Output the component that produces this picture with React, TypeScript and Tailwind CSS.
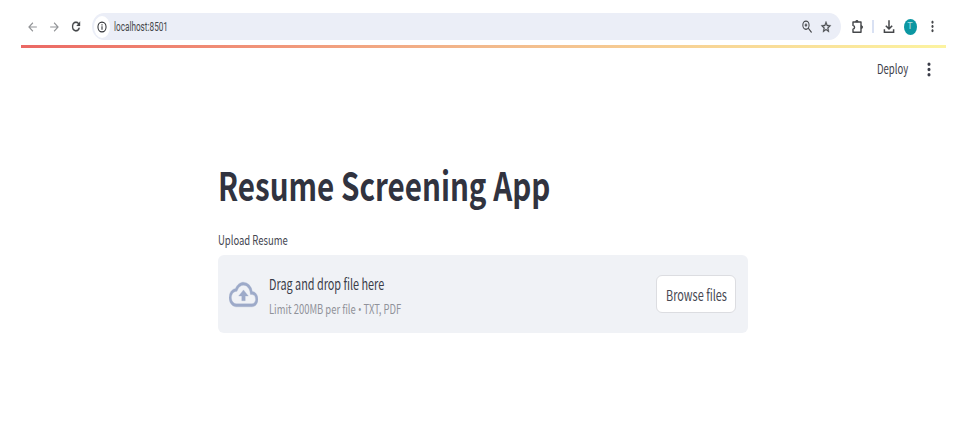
import { useLayoutEffect, useRef, useState, type ReactNode } from "react";

const sans = "font-['Noto_Sans_CJK_SC',sans-serif]";

/** A single line of condensed text that fills the width of its box. */
function Line({ children, className }: { children: ReactNode; className: string }) {
  const box = useRef<HTMLDivElement>(null);
  const text = useRef<HTMLSpanElement>(null);
  const [scale, setScale] = useState(1);
  useLayoutEffect(() => {
    if (box.current && text.current) {
      setScale(box.current.clientWidth / text.current.offsetWidth);
    }
  }, []);
  return (
    <div ref={box} className={`shrink-0 whitespace-nowrap ${className}`}>
      <span ref={text} className="inline-block origin-left" style={{ transform: `scaleX(${scale})` }}>
        {children}
      </span>
    </div>
  );
}

function Icon({ d, className }: { d: string; className: string }) {
  return (
    <svg viewBox="0 0 24 24" preserveAspectRatio="none" fill="currentColor" className={`shrink-0 ${className}`}>
      <path d={d} />
    </svg>
  );
}

const DOTS =
  "M12 8c1.1 0 2-.9 2-2s-.9-2-2-2-2 .9-2 2 .9 2 2 2zm0 2c-1.1 0-2 .9-2 2s.9 2 2 2 2-.9 2-2-.9-2-2-2zm0 6c-1.1 0-2 .9-2 2s.9 2 2 2 2-.9 2-2-.9-2-2-2z";

function BrowserBar() {
  return (
    <header className="flex h-[27px] items-center pl-[26px] text-[#45474a]">
      <Icon className="h-[14px] w-[13px] text-[#929497]" d="M20 11H7.83l5.59-5.59L12 4l-8 8 8 8 1.41-1.41L7.83 13H20v-2z" />
      <Icon className="ml-[9px] h-[14px] w-[13px] text-[#929497]" d="M12 4l-1.41 1.41L16.17 11H4v2h12.17l-5.58 5.59L12 20l8-8z" />
      <Icon
        className="ml-[9px] h-[15px] w-[12px] stroke-current stroke-[0.3]"
        d="M17.65 6.35A7.96 7.96 0 0 0 12 4a8 8 0 1 0 7.73 10h-2.6A5.6 5.6 0 1 1 12 6.4c1.55 0 2.95.7 4 1.75L13 11h7.2V3.8z"
      />
      <div className="ml-[10px] flex h-[27px] w-[749px] items-center rounded-[12px/13.5px] bg-[#ebeef7] pl-[2px] pr-[9px]">
        <span className="flex h-[22px] w-[16px] items-center justify-center rounded-[50%] bg-white">
          <Icon
            className="h-[12px] w-[10px] text-[#303236]"
            d="M12 1a11 11 0 1 0 0 22 11 11 0 0 0 0-22zm0 2.5a8.5 8.5 0 1 1 0 17 8.5 8.5 0 0 1 0-17zM10.7 6.5h2.6v2.6h-2.6zM10.7 10.7h2.6v6.8h-2.6z"
          />
        </span>
        <Line className="ml-[4px] mt-[1px] w-[54px] font-[Roboto,sans-serif] text-[12px] leading-[27px] text-[#45474a]">localhost:8501</Line>
        <span className="grow" />
        <svg viewBox="0 0 24 24" preserveAspectRatio="none" fill="none" stroke="currentColor" strokeWidth="2.5" className="h-[13px] w-[10px]">
          <circle cx="9.5" cy="9.5" r="7.5" />
          <path d="M15 15l8 8M6.5 9.5h6M9.5 6.5v6" />
        </svg>
        <Icon
          className="ml-[8px] h-[14px] w-[12px] stroke-current stroke-[0.6]"
          d="M22 9.24l-7.19-.62L12 2 9.19 8.63 2 9.24l5.46 4.73L5.82 21 12 17.27 18.18 21l-1.63-7.03L22 9.24zM12 15.4l-3.76 2.27 1-4.28-3.32-2.88 4.38-.38L12 6.1l1.71 4.04 4.38.38-3.32 2.88 1 4.28L12 15.4z"
        />
      </div>
      <svg viewBox="0 0 12 14" fill="none" stroke="currentColor" strokeWidth="1.4" strokeLinejoin="round" className="ml-[11px] h-[14px] w-[12px] shrink-0">
        <path d="M1 2h8v10.2H1V9.2c2.1-.4 2.1-3.4 0-3.8z" />
        <path d="M3.6 1.7a1.3 1.4 0 0 1 2.6 0zM9.3 5.6a1.3 1.5 0 0 1 0 3z" fill="currentColor" strokeWidth=".8" />
      </svg>
      <span className="ml-[8px] h-[13px] w-[1.5px] bg-[#d9e1f3]" />
      <svg viewBox="0 0 12 14" fill="none" stroke="currentColor" strokeWidth="1.5" className="ml-[9px] h-[14px] w-[12px] shrink-0">
        <path d="M6 .3v8.6M2.8 5.7L6 8.9l3.2-3.2M1.4 9.3v3h9.2v-3" />
      </svg>
      <span className="ml-[9px] flex h-[16px] w-[13px] items-center justify-center rounded-[50%] bg-[#0b97a2] font-[Roboto,sans-serif] text-[9px] text-[#b5e0e4]">
        T
      </span>
      <Icon className="ml-[9px] h-[17px] w-[13px]" d={DOTS} />
    </header>
  );
}

function Uploader() {
  return (
    <section className="flex h-[78px] w-[530px] items-center rounded-[6px] bg-[#f0f2f6] pl-[11px] pr-[12px]">
      <Icon
        className="mt-[1px] h-[37px] w-[29px] stroke-current stroke-[0.2] text-[#9daac9]"
        d="M19.35 10.04A7.49 7.49 0 0 0 12 4C9.11 4 6.6 5.64 5.35 8.04A5.994 5.994 0 0 0 0 14c0 3.31 2.69 6 6 6h13c2.76 0 5-2.24 5-5 0-2.64-2.05-4.78-4.65-4.96zM19 18H6c-2.21 0-4-1.79-4-4 0-2.05 1.53-3.76 3.56-3.97l1.07-.11.5-.95A5.469 5.469 0 0 1 12 6c2.62 0 4.88 1.86 5.39 4.43l.3 1.5 1.53.11A2.98 2.98 0 0 1 22 15c0 1.65-1.35 3-3 3zM8 13h2.55v3h2.9v-3H16l-4-4z"
      />
      <div className="ml-[11px] mt-[6px] grow">
        <Line className="w-[115px] text-[15px] leading-[24px] text-[#3b3d49]">Drag and drop file here</Line>
        <Line className="w-[132px] text-[13px] leading-[25px] text-[#90929a]">
          Limit 200MB per file <span className="font-['Open_Sans',sans-serif]">•</span> TXT, PDF
        </Line>
      </div>
      <button className="flex h-[38px] w-[80px] items-center justify-center rounded-[6px] border border-[#dcdde1] bg-white pl-[1px]">
        <Line className="w-[61px] text-left text-[15px] leading-[25px] text-[#464852]">Browse files</Line>
      </button>
    </section>
  );
}

export default function App() {
  return (
    <div className={`h-[442px] w-[970px] overflow-hidden bg-white pt-[13px] ${sans}`}>
      <BrowserBar />
      <div className="ml-[21px] mt-[5px] h-[3px] w-[925px] bg-linear-to-r from-[#eb6864] via-[#f2b98c] to-[#fcf3a0]" />
      <div className="flex h-[42px] items-center justify-end pr-[32px] text-[#3b3d49]">
        <Line className="mb-[2px] w-[31px] text-[13.5px] leading-[20px]">Deploy</Line>
        <Icon className="ml-[12px] h-[21px] w-[18px]" d={DOTS} />
      </div>
      <main className="ml-[217.5px] mt-[66px]">
        <h1>
          <Line className="w-[332px] text-[38.5px] font-bold leading-[56px] text-[#31333f]">Resume Screening App</Line>
        </h1>
        <div className="mb-[5px] mt-[18px]">
          <Line className="w-[69.5px] text-[13px] leading-[20px] text-[#454752]">Upload Resume</Line>
        </div>
        <Uploader />
      </main>
    </div>
  );
}
